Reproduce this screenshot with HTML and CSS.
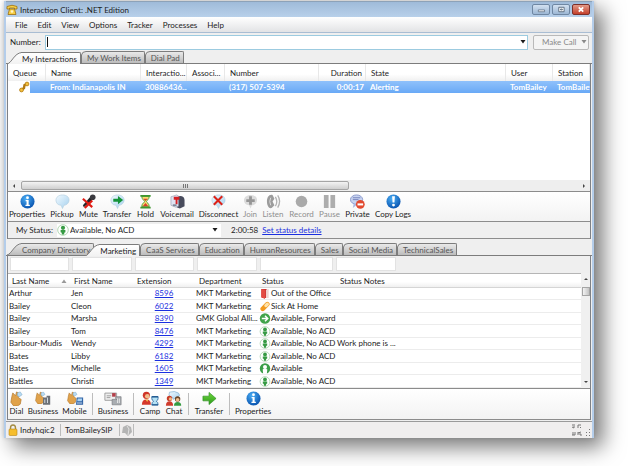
FILE: index.html
```html
<!DOCTYPE html>
<html lang="en">
<head>
<meta charset="utf-8">
<title>Interaction Client: .NET Edition</title>
<link rel="stylesheet" href="styles.css">
</head>
<body>
<svg class="defs" aria-hidden="true">
  <defs>
    <linearGradient id="tabgrey" x1="0" y1="0" x2="0" y2="1"><stop offset="0" stop-color="#e9e9e9"/><stop offset="1" stop-color="#bcbcbc"/></linearGradient>
    <linearGradient id="tablight" x1="0" y1="0" x2="0" y2="1"><stop offset="0" stop-color="#fff"/><stop offset="1" stop-color="#f2f2f2"/></linearGradient>
    <radialGradient id="blue" cx=".4" cy=".3" r=".7"><stop offset="0" stop-color="#4aaef5"/><stop offset="1" stop-color="#0a55b0"/></radialGradient>
    <linearGradient id="green" x1="0" y1="0" x2="0" y2="1"><stop offset="0" stop-color="#6fd83c"/><stop offset="1" stop-color="#2c9a1c"/></linearGradient>
    <linearGradient id="bubble" x1="0" y1="0" x2="1" y2="1"><stop offset="0" stop-color="#f2faff"/><stop offset="1" stop-color="#a4d0ee"/></linearGradient>
  </defs>
  <symbol id="cap-big" viewBox="0 0 15 12"><path d="M0 12C5 11 7 1 15 .5V12Z" stroke="none"/><path d="M0 12C5 11 7 1 15 .5" fill="none" stroke="#7c7c7c"/></symbol>
  <symbol id="cap-small" viewBox="0 0 5 12"><path d="M.5 12V4Q1 .5 5 .5V12Z" stroke="none"/><path d="M.5 12V4Q1 .5 5 .5" fill="none" stroke="#7c7c7c"/></symbol>
  <symbol id="info" viewBox="0 0 16 16"><circle cx="8" cy="8" r="7.5" fill="url(#blue)"/><circle cx="8" cy="4" r="1.5" fill="#fff"/><path d="M6 6.5h3.2v5h1.3v1.3H5.8v-1.3H7V7.8H6Z" fill="#fff"/></symbol>
  <symbol id="pickup" viewBox="0 0 16 16"><path d="M8 1C12 1 15 3 15 6.500S12 12 9.500 12L8 15.500 6.500 12C3 12 1 9.500 1 6.500S4 1 8 1Z" fill="url(#bubble)" stroke="#b4cfe0" stroke-width=".7"/></symbol>
  <symbol id="mute" viewBox="0 0 16 16"><path d="M13.500 1.500 15 4 9 9 3 14 2 12 9 4Z" fill="#252528"/><circle cx="12.500" cy="3.500" r="3" fill="#3b3b40"/><path d="m2 5 10 9M12 7 4 15" stroke="#e01b13" stroke-width="2.300"/></symbol>
  <symbol id="transfer" viewBox="0 0 16 16"><use href="#pickup"/><path d="M3.500 5h5V2.200L14 6.500 8.500 11V8.300h-5Z" fill="#14943a"/></symbol>
  <symbol id="hold" viewBox="0 0 16 16"><path d="M4 2.500h8C12 6 9 7 9 8s3 2 3 5.500H4C4 10 7 9 7 8S4 6 4 2.500Z" fill="#f9dc70" stroke="#4d9e38"/><path d="M2.500 1h11v2h-11ZM2.500 13.500h11v2h-11Z" fill="#3e962e"/><path d="M5.500 5h5L8 7.500ZM5 13l3-3.500 3 3.500Z" fill="#d8432c"/></symbol>
  <symbol id="voicemail" viewBox="0 0 16 16"><path d="M7 5q0-3 4-3t4.500 4v7l-5 2.500L7 14Z" fill="#484b5c"/><path d="m1 3 6-2 2 1v11l-3 1-5-2Z" fill="#dfe4f3" stroke="#8f94a8" stroke-width=".6"/><path d="M4 3h6v3H8v5H6V6H4Z" fill="#d52024"/><path d="M3 11h4v2H3Z" fill="#7f8798"/></symbol>
  <symbol id="disconnect" viewBox="0 0 16 16"><use href="#pickup"/><path d="m3 2.500 9 9M12 2.500l-9 9" stroke="#dd2218" stroke-width="2.200"/></symbol>
  <symbol id="join" viewBox="0 0 16 16"><path d="M8 1C12 1 15 3 15 6.500S12 12 9.500 12L8 15.500 6.500 12C3 12 1 9.500 1 6.500S4 1 8 1Z" fill="#dcdcdc"/><path d="M8 2.500v9M3.500 7h9" stroke="#969696" stroke-width="3"/></symbol>
  <symbol id="listen" viewBox="0 0 16 16"><path d="M7 1C3 0 1 4 1 8s2 8 5 7l3-3-2-4 2-3Z" fill="#9c9c9c"/><path d="M5 4q-2 4 0 8" fill="none" stroke="#dedede"/><path d="M10 3q3 5 0 10M12.500 1.500q4 6 0 13" fill="none" stroke="#b2b2b2" stroke-width="1.400"/></symbol>
  <symbol id="record" viewBox="0 0 16 16"><circle cx="8" cy="8" r="6.200" fill="#aaa"/></symbol>
  <symbol id="pause" viewBox="0 0 16 16"><path d="M2 1h5v14H2ZM9 1h5v14H9Z" fill="#adadad"/></symbol>
  <symbol id="private" viewBox="0 0 16 16"><ellipse cx="7" cy="6" rx="6.500" ry="5" fill="#c7d3f0" stroke="#8997cb"/><path d="M3 4h8M3 6h6" stroke="#7582bb"/><path d="m4 10-1 5 5-4Z" fill="#a9b8e4"/><circle cx="11" cy="11" r="4.700" fill="#e2492f"/><path d="M8 10h6v2.200H8Z" fill="#fff"/></symbol>
  <symbol id="copylogs" viewBox="0 0 16 16"><circle cx="8" cy="8" r="7.500" fill="url(#blue)"/><path d="M6.500 2.500h3L9 9H7Z" fill="#fff"/><circle cx="8" cy="11.800" r="1.500" fill="#fff"/></symbol>
  <symbol id="hand" viewBox="0 0 16 16"><path d="M3 6 4 2l3 3 1-4 2 1v5l3 2-1 5-3 2H5l-3-4Z" fill="#e0a24b" stroke="#b0752a" stroke-width=".7"/><path d="m9 2 3-1 2 3-3 2-2-1Z" fill="#b9dcf3" stroke="#7baacb" stroke-width=".6"/></symbol>
  <symbol id="dialbusiness" viewBox="0 0 20 16"><use href="#hand" width="14" height="14"/><path d="M10 7h4V5h4v10h-8Z" fill="#6c7178"/><path d="M11.500 9h1v4h-1ZM14.500 7h1v6h-1Z" fill="#dce2e7"/></symbol>
  <symbol id="dialmobile" viewBox="0 0 20 16"><use href="#hand" width="14" height="14"/><path d="M12 7h7v8h-8Z" fill="#2f62a5"/><path d="M13 8h5l-.5 3h-5Z" fill="#a9d2f2"/><path d="M12 13h6" stroke="#dce8f6"/></symbol>
  <symbol id="card" viewBox="0 0 20 16"><path d="M1 2h13v8H1Z" fill="#eee" stroke="#999"/><path d="M3 5h5M3 7h4" stroke="#999"/><path d="M9 2h4v4H9Z" fill="#b23f4a"/><path d="M9 9h4V6h6v9H9Z" fill="#a9adb1" stroke="#74787c" stroke-width=".7"/><path d="M14 8h1v5M17 8v5" stroke="#eee"/></symbol>
  <symbol id="camp" viewBox="0 0 20 16"><circle cx="6" cy="4.500" r="4" fill="#cf3427"/><circle cx="7" cy="5.500" r="2.600" fill="#efbd8c"/><path d="M1 15q0-6 5-6t5 6Z" fill="#d5382a"/><path d="M5 9h3l-1 3Z" fill="#f4ca4c"/><path d="M12 6h7v2q0 2-2 3 2 1 2 4h-7q0-3 2-4-2-1-2-3Z" fill="#b5e1f4" stroke="#3471a7"/><path d="M12 6h7M12 15h7" stroke="#235c92" stroke-width="1.500"/></symbol>
  <symbol id="chat" viewBox="0 0 20 16"><path d="M5 1q6-2 10 1 3 4-3 5l-3 2V7q-6 0-4-6Z" fill="url(#bubble)" stroke="#78aace" stroke-width=".7"/><circle cx="5" cy="8" r="3" fill="#c63b26"/><circle cx="6" cy="8.500" r="1.800" fill="#edb988"/><path d="M1 16q0-5 4-5t4 5Z" fill="#d03b2c"/><circle cx="14" cy="8.500" r="3" fill="#6b4526"/><circle cx="14" cy="9.500" r="2" fill="#efc090"/><path d="M10 16q0-4 4-4t4 4Z" fill="#349b42"/></symbol>
  <symbol id="arrow" viewBox="0 0 16 16"><path d="M1 5.500h6.500V1.500L15 8l-7.500 6.500v-4H1Z" fill="url(#green)" stroke="#2c8d22" stroke-width=".7"/></symbol>
  <symbol id="person" viewBox="0 0 12 12"><circle cx="6" cy="6" r="5.300" fill="#fff" stroke="#9fcea2" stroke-width=".8"/><circle cx="6" cy="3.800" r="2.100" fill="#379b44"/><path d="M3.600 6h4.800v2.200L7.200 8.700V10.500H4.800V8.700L3.600 8.200Z" fill="#379b44"/></symbol>
  <symbol id="avail" viewBox="0 0 12 12"><circle cx="6" cy="6" r="5.700" fill="#3a9e47"/><circle cx="6" cy="4.300" r="2.200" fill="#fff"/><path d="M3.500 7q2.500-2 5 0L8 12H4Z" fill="#fff"/></symbol>
  <symbol id="forward" viewBox="0 0 12 12"><circle cx="6" cy="6" r="5.700" fill="#41a44b"/><path d="M2.500 6h6M6 3l3 3-3 3" fill="none" stroke="#fff" stroke-width="1.600"/></symbol>
  <symbol id="door" viewBox="0 0 12 12"><path d="M2 1h6v10H3L2 10Z" fill="#cf2c2b"/><path d="m7 2 3-1v10l-3 0Z" fill="#efd4cf"/><path d="m2 1 4 1v10l-4-2Z" fill="#e34c43"/></symbol>
  <symbol id="pill" viewBox="0 0 12 12"><path d="m3.500 8.500 5-5" stroke="#f29a1f" stroke-width="5" stroke-linecap="round"/><path d="m7 5 1.500-1.500" stroke="#ffe3a8" stroke-width="3.600" stroke-linecap="round"/></symbol>
  <symbol id="ring" viewBox="0 0 12 12"><path d="M3.500 9 6 7 6.500 4 9 3" fill="none" stroke="#b27a12" stroke-width="2.400"/><circle cx="3.500" cy="9" r="1.900" fill="#f3c03c" stroke="#b27a12" stroke-width=".8"/><circle cx="9" cy="3" r="1.900" fill="#f3c03c" stroke="#b27a12" stroke-width=".8"/></symbol>
  <symbol id="phone" viewBox="0 0 12 12"><path d="M1 5V2.500Q6 0 11 2.500V5H8.500V4h-5v1Z" fill="#f7d24b" stroke="#9c6f10" stroke-width=".8"/><path d="M3.500 5h5L10 10.500H2Z" fill="#f7cf45" stroke="#9c6f10" stroke-width=".8"/><circle cx="6" cy="7.500" r="1.300" fill="#fff6cd"/></symbol>
  <symbol id="lock" viewBox="0 0 12 12"><path d="M3.500 6V4q0-3 2.500-3t2.500 3v2" fill="none" stroke="#a38b42" stroke-width="1.400"/><rect x="2" y="5" width="8" height="6.500" rx="1" fill="#f6bd2c" stroke="#b98614" stroke-width=".6"/></symbol>
  <symbol id="grey" viewBox="0 0 12 12"><path d="m2 3 4-2 4 2 1 5-4 4-3-3H1Z" fill="#b4b4b4"/><path d="m6 2 2 3-1 6" fill="none" stroke="#e3e3e3"/></symbol>
  <symbol id="down" viewBox="0 0 6 4"><path d="M.5 0h5L3 3.500Z" fill="currentColor"/></symbol>
</svg>

<main class="window">
  <header class="title">
    <svg class="i12"><use href="#phone"/></svg>
    <h1>Interaction Client: .NET Edition</h1>
    <button class="win" type="button" aria-label="Minimize"><svg viewBox="0 0 18 10"><path d="M6 5.500h7v2H6Z" fill="#fff" stroke="#556579" stroke-width=".8"/></svg></button>
    <button class="win" type="button" aria-label="Maximize"><svg viewBox="0 0 18 10"><path d="M6.500 2.500h6v5h-6Z" fill="#fff" stroke="#556579"/><path d="M8.500 4.500h2v1h-2Z" stroke="#556579" fill="none"/></svg></button>
    <button class="win close" type="button" aria-label="Close"><svg viewBox="0 0 18 10"><path d="m6.500 2.500 5 5M11.500 2.500l-5 5" stroke="#fff" stroke-width="2"/></svg></button>
  </header>

  <nav class="menu">
    <button type="button">File</button><button type="button">Edit</button><button type="button">View</button><button type="button">Options</button><button type="button">Tracker</button><button type="button">Processes</button><button type="button">Help</button>
  </nav>

  <form class="dial">
    <label for="number">Number:</label>
    <div class="combo"><span class="caret"></span><input id="number" type="text"><svg class="down"><use href="#down"/></svg></div>
    <button class="call" type="button" disabled>Make Call <svg class="down"><use href="#down"/></svg></button>
  </form>

  <div class="tabs upper">
    <button class="tab active" type="button"><svg class="big"><use href="#cap-big"/></svg><span>My Interactions</span></button>
    <button class="tab" type="button"><svg class="small"><use href="#cap-small"/></svg><span>My Work Items</span></button>
    <button class="tab" type="button"><svg class="small"><use href="#cap-small"/></svg><span>Dial Pad</span></button>
  </div>

  <section class="panel">
    <div class="calls">
      <table>
        <colgroup><col class="c-queue"><col class="c-name"><col class="c-int"><col class="c-assoc"><col class="c-num"><col class="c-dur"><col><col class="c-user"><col class="c-station"></colgroup>
        <thead><tr><th>Queue</th><th>Name</th><th>Interactio...</th><th>Associ...</th><th>Number</th><th class="right">Duration</th><th>State</th><th>User</th><th>Station</th></tr></thead>
        <tbody><tr><td class="ring"><svg class="i12"><use href="#ring"/></svg></td><td>From: Indianapolis IN</td><td>30886436...</td><td></td><td>(317) 507-5394</td><td class="right">0:00:17</td><td>Alerting</td><td>TomBailey</td><td>TomBailey</td></tr></tbody>
      </table>
    </div>
    <div class="hscroll"><svg class="arrow" viewBox="0 0 6 6"><path d="M4 1v4L2 3Z"/></svg><span class="thumb"><i></i></span><svg class="arrow" viewBox="0 0 6 6"><path d="M2 1v4l2-2Z"/></svg></div>
    <div class="tools call-tools">
      <button type="button"><svg><use href="#info"/></svg>Properties</button>
      <button type="button"><svg><use href="#pickup"/></svg>Pickup</button>
      <button type="button"><svg><use href="#mute"/></svg>Mute</button>
      <button type="button"><svg><use href="#transfer"/></svg>Transfer</button>
      <button type="button"><svg><use href="#hold"/></svg>Hold</button>
      <button type="button"><svg><use href="#voicemail"/></svg>Voicemail</button>
      <button type="button"><svg><use href="#disconnect"/></svg>Disconnect</button>
      <button type="button" disabled><svg><use href="#join"/></svg>Join</button>
      <button type="button" disabled><svg><use href="#listen"/></svg>Listen</button>
      <button type="button" disabled><svg><use href="#record"/></svg>Record</button>
      <button type="button" disabled><svg><use href="#pause"/></svg>Pause</button>
      <button type="button"><svg><use href="#private"/></svg>Private</button>
      <button type="button"><svg><use href="#copylogs"/></svg>Copy Logs</button>
    </div>
    <div class="mystatus">
      <label for="status">My Status:</label>
      <div class="pick"><svg class="i12"><use href="#person"/></svg><select id="status"><option>Available, No ACD</option></select><svg class="down"><use href="#down"/></svg></div>
      <span class="timer">2:00:58</span>
      <a href="#">Set status details</a>
    </div>
  </section>

  <div class="tabs lower">
    <button class="tab" type="button"><svg class="big"><use href="#cap-big"/></svg><span>Company Directory</span></button>
    <button class="tab active" type="button"><svg class="big"><use href="#cap-big"/></svg><span>Marketing</span></button>
    <button class="tab" type="button"><svg class="small"><use href="#cap-small"/></svg><span>CaaS Services</span></button>
    <button class="tab" type="button"><svg class="small"><use href="#cap-small"/></svg><span>Education</span></button>
    <button class="tab" type="button"><svg class="small"><use href="#cap-small"/></svg><span>HumanResources</span></button>
    <button class="tab" type="button"><svg class="small"><use href="#cap-small"/></svg><span>Sales</span></button>
    <button class="tab" type="button"><svg class="small"><use href="#cap-small"/></svg><span>Social Media</span></button>
    <button class="tab" type="button"><svg class="small"><use href="#cap-small"/></svg><span>TechnicalSales</span></button>
  </div>

  <section class="panel">
    <div class="filters">
      <input type="text" aria-label="Filter last name"><input type="text" aria-label="Filter first name"><input type="text" aria-label="Filter extension"><input type="text" aria-label="Filter department"><input type="text" aria-label="Filter status"><input type="text" aria-label="Filter notes">
    </div>
    <div class="directory">
      <table>
        <colgroup><col class="d-last"><col class="d-first"><col class="d-ext"><col class="d-dept"><col class="d-status"><col></colgroup>
        <thead><tr><th><span class="sorted">Last Name <svg class="down"><use href="#down"/></svg></span></th><th>First Name</th><th>Extension</th><th>Department</th><th>Status</th><th>Status Notes</th></tr></thead>
        <tbody>
          <tr><td>Arthur</td><td>Jen</td><td><a href="#">8596</a></td><td>MKT Marketing</td><td><span class="st"><svg class="i12"><use href="#door"/></svg>Out of the Office</span></td><td></td></tr>
          <tr><td>Bailey</td><td>Cleon</td><td><a href="#">6022</a></td><td>MKT Marketing</td><td><span class="st"><svg class="i12"><use href="#pill"/></svg>Sick At Home</span></td><td></td></tr>
          <tr><td>Bailey</td><td>Marsha</td><td><a href="#">8390</a></td><td>GMK Global Alli...</td><td><span class="st"><svg class="i12"><use href="#forward"/></svg>Available, Forward</span></td><td></td></tr>
          <tr><td>Bailey</td><td>Tom</td><td><a href="#">8476</a></td><td>MKT Marketing</td><td><span class="st"><svg class="i12"><use href="#person"/></svg>Available, No ACD</span></td><td></td></tr>
          <tr><td>Barbour-Mudis</td><td>Wendy</td><td><a href="#">4292</a></td><td>MKT Marketing</td><td><span class="st"><svg class="i12"><use href="#person"/></svg>Available, No ACD</span></td><td>Work phone is ...</td></tr>
          <tr><td>Bates</td><td>Libby</td><td><a href="#">6182</a></td><td>MKT Marketing</td><td><span class="st"><svg class="i12"><use href="#person"/></svg>Available, No ACD</span></td><td></td></tr>
          <tr><td>Bates</td><td>Michelle</td><td><a href="#">1605</a></td><td>MKT Marketing</td><td><span class="st"><svg class="i12"><use href="#avail"/></svg>Available</span></td><td></td></tr>
          <tr><td>Battles</td><td>Christi</td><td><a href="#">1349</a></td><td>MKT Marketing</td><td><span class="st"><svg class="i12"><use href="#person"/></svg>Available, No ACD</span></td><td></td></tr>
        </tbody>
      </table>
      <div class="vscroll"><svg class="arrow" viewBox="0 0 6 6"><path d="M1 4h4L3 2Z"/></svg><span class="vthumb"></span><svg class="arrow last" viewBox="0 0 6 6"><path d="M1 2h4L3 4Z"/></svg></div>
    </div>
    <div class="tools dir-tools">
      <button type="button"><svg><use href="#hand"/></svg>Dial</button>
      <button type="button"><svg class="wide"><use href="#dialbusiness"/></svg>Business</button>
      <button type="button"><svg class="wide"><use href="#dialmobile"/></svg>Mobile</button>
      <hr>
      <button type="button"><svg class="wide"><use href="#card"/></svg>Business</button>
      <hr>
      <button type="button"><svg class="wide"><use href="#camp"/></svg>Camp</button>
      <button type="button"><svg class="wide"><use href="#chat"/></svg>Chat</button>
      <hr>
      <button type="button"><svg><use href="#arrow"/></svg>Transfer</button>
      <hr>
      <button type="button"><svg><use href="#info"/></svg>Properties</button>
    </div>
  </section>

  <footer class="statusbar">
    <span class="server"><svg class="i12"><use href="#lock"/></svg>Indyhqic2</span>
    <span class="station">TomBaileySIP</span>
    <span class="plug"><svg class="i12"><use href="#grey"/></svg></span>
    <svg class="grips" viewBox="0 0 20 12"><path d="M1 1h3M3 2v2M7 4V1h3M1 3l2 1M9 3l1 1M2 8v3M4 8v3H1M7 8v3M7 9l3-1M9 9v2h2" fill="none" stroke="#777"/><path d="M18 5h1v1h-1ZM18 8h1v1h-1ZM18 11h1v1h-1ZM15 8h1v1h-1ZM15 11h1v1h-1Z" fill="#777"/></svg>
  </footer>
</main>
</body>
</html>
```
FILE: styles.css
```css
* { box-sizing: border-box; }

body {
  margin: 0;
  padding: 1px 34px 28px 4px;
  background: #fff;
  color: #1c1c1c;
  font: 8px/12px Lato, "Noto Sans", sans-serif;
}

button, input, select {
  margin: 0;
  padding: 0;
  border: 0;
  background: none;
  color: inherit;
  font: inherit;
  white-space: nowrap;
}

a { color: #1a2fe0; }
.defs { position: absolute; width: 0; height: 0; }
.i12 { width: 12px; height: 12px; flex: none; }
.down { width: 6px; height: 4px; flex: none; }

.window {
  border: solid #b4cdea;
  border-width: 0 2px 0 2px;
  background: #efefef;
  box-shadow: 9px 9px 20px #777, 0 0 4px #ccc;
}

/* Title bar and menu */
.title {
  display: flex;
  align-items: center;
  gap: 2px;
  height: 16px;
  padding: 0 2px 0 0;
  border-top: 1px solid #8da2b8;
  background: linear-gradient(#9fbbd9, #b8d0ea);
}
.title h1 { flex: 1; margin: 0; font-size: 8px; font-weight: 400; }
.win {
  width: 18px;
  height: 11px;
  border: 1px solid #6f87a3;
  border-radius: 2px;
  background: linear-gradient(#d2e0f0, #9db8d5);
}
.win svg { display: block; width: 100%; height: 9px; }
.close { border-color: #7c2f2a; background: linear-gradient(#e39a88, #c4402c); }

.menu {
  display: flex;
  gap: 10px;
  height: 16px;
  padding-left: 9px;
  border-bottom: 1px solid #a9bdd3;
  background: linear-gradient(#fff, #e2e3e5);
}

/* Number entry */
.dial {
  display: flex;
  align-items: center;
  gap: 5px;
  height: 18px;
  padding: 1px 3px 1px 4px;
}
.dial label { width: 30px; }
.combo {
  display: flex;
  flex: 1;
  align-items: center;
  height: 15px;
  padding: 1px 1px;
  border: 1px solid #9ccbe0;
  background: #fff;
}
.combo input { flex: 1; min-width: 0; outline: 0; }
.caret { width: 1px; height: 10px; background: #111; }
.call {
  display: flex;
  align-items: center;
  justify-content: space-between;
  width: 56px;
  height: 15px;
  padding: 0 1px 0 8px;
  border: 1px solid #b9b9b9;
  border-radius: 2px;
  background: #f4f4f4;
  color: #8a8a8a;
}

/* Tabs */
.tabs {
  display: flex;
  align-items: flex-end;
  padding-left: 1px;
  border-bottom: 1px solid #7c7c7c;
}
.upper { height: 13px; }
.lower { height: 17px; }
.tab { display: flex; height: 12px; color: #555; }
.tab span {
  height: 12px;
  padding: 0 3px 0 1px;
  border-top: 1px solid #7c7c7c;
  border-right: 1px solid #7c7c7c;
  border-radius: 0 2px 0 0;
  background: linear-gradient(#e9e9e9, #bcbcbc);
  line-height: 12px;
}
.tab svg { flex: none; height: 12px; fill: url(#tabgrey); }
.tab .big { width: 15px; margin-right: -1px; }
.tab .small { width: 5px; }
.tab.active { color: #1c1c1c; z-index: 1; margin-bottom: -1px; }
.tab.active svg { fill: url(#tablight); }
.tab.active span { background: linear-gradient(#fff, #f2f2f2); }
.lower .active { margin-left: -9px; }

/* Shared table look */
.panel { margin: 0 1px; border: solid #7d8086; border-width: 0 1px; }
table { width: 100%; border-collapse: separate; border-spacing: 0; table-layout: fixed; }
th, td { overflow: hidden; padding: 0; font-weight: 400; text-align: left; white-space: nowrap; }
th { background: linear-gradient(#fff 60%, #f0f0f0); }
.right { text-align: right; }

/* Active calls */
.calls { min-height: 116px; background: #fff; }
.calls th { height: 17px; padding: 0 3px 0 5px; border-right: 1px solid #e8e8e8; }
.calls td {
  height: 12px;
  padding: 0 2px 0 4px;
  background: linear-gradient(#8fc1fb, #69a9f6);
  color: #fff;
  font-weight: 700;
}
.calls .ring { padding: 0 0 0 10px; background: linear-gradient(90deg, #fff 22px, transparent 22px), linear-gradient(#8fc1fb, #69a9f6); }
.ring svg { display: block; }
.c-queue { width: 38px; }
.c-name { width: 95px; }
.c-int { width: 46px; }
.c-assoc { width: 38px; }
.c-num { width: 94px; }
.c-dur, .c-user { width: 47px; }
.c-station { width: 37px; }

.arrow { width: 6px; height: 6px; fill: #444; }
.hscroll { display: flex; align-items: center; gap: 4px; height: 12px; padding: 0 3px; border-bottom: 1px solid #8c8c8c; background: #eee; }
.thumb {
  width: 57%;
  height: 9px;
  margin-right: auto;
  border: 1px solid #a5a5a5;
  border-radius: 2px;
  background: linear-gradient(#f3f3f3, #cfcfcf);
}
.thumb i { display: block; width: 5px; height: 4px; margin: 2px auto; background: repeating-linear-gradient(90deg, #777 0 1px, transparent 1px 2px); }

/* Icon toolbars */
.tools {
  display: grid;
  align-items: center;
  height: 30px;
  padding-left: 2px;
  border-bottom: 1px solid #8c8c8c;
  background: linear-gradient(#fff, #f3f3f3);
}
.tools button {
  display: flex;
  flex-direction: column;
  align-items: center;
  justify-self: center;
  line-height: 11px;
}
.tools svg { width: 15px; height: 15px; flex: none; }
.tools .wide { width: 18px; }
.tools button:disabled { color: #8f8f8f; }
.call-tools { grid-template-columns: 34px 22px 17px 26px 17px 32px 37px 12px 20px 23px 19px 23px 34px; column-gap: 7px; }
.tools.dir-tools {
  grid-template-columns: 13px 28px 23px 1px 28px 1px 20px 16px 1px 28px 1px 34px;
  column-gap: 6px;
  height: 32px;
  border-top: 1px solid #8c8c8c;
}
.tools hr { width: 1px; height: 22px; margin: 0; border: 0; background: #bdbdbd; }

/* Own status */
.mystatus { display: flex; align-items: center; height: 17px; padding-left: 8px; border-bottom: 1px solid #8c8c8c; }
.mystatus label { width: 41px; }
.pick { display: flex; align-items: center; gap: 1px; width: 164px; height: 13px; padding-right: 3px; background: #fff; }
.pick select { flex: 1; appearance: none; }
.timer { margin: 0 4px 0 10px; }

/* Directory */
.filters {
  display: grid;
  grid-template-columns: 59px 60px 59px 60px 73px 60px;
  gap: 3px;
  padding: 1px 2px 2px;
}
.filters input { width: 100%; height: 14px; border: 1px solid #e2e2e2; background: #fff; }
.directory { display: flex; background: #fff; }
.directory table { flex: 1; }
.directory th { height: 15px; padding-left: 4px; border-top: 1px solid #b5b5b5; border-bottom: 1px solid #d5d5d5; }
.directory td { height: 12px; padding-left: 1px; border-bottom: 1px solid #ececec; line-height: 11px; }
.directory tr:nth-child(even) td { height: 13px; }
.directory td:nth-child(3) { padding-right: 1px; text-align: center; }
.d-last, .d-ext { width: 62px; }
.d-first, .d-dept { width: 63px; }
.d-status { width: 78px; }
.sorted { display: flex; align-items: center; justify-content: space-between; padding-right: 3px; }
.sorted .down { color: #999; transform: rotate(180deg); }
.st { display: flex; align-items: center; height: 11px; }
.st svg { height: 11px; }
.vscroll { display: flex; flex-direction: column; align-items: center; width: 9px; padding: 3px 0; background: #f0f0f0; }
.vthumb { width: 8px; height: 9px; margin-top: 5px; border: 1px solid #a5a5a5; background: linear-gradient(90deg, #f3f3f3, #c4c4c4); }
.last { margin-top: auto; }

/* Status bar */
.statusbar { display: flex; align-items: center; height: 17px; margin-top: 1px; padding: 1px; border-top: 1px solid #9a9a9a; background: #f0eeee; }
.statusbar span { display: flex; align-items: center; height: 12px; border-right: 1px solid #bbb; }
.statusbar .server { gap: 1px; width: 54px; }
.statusbar .station { width: 59px; padding-left: 4px; }
.statusbar .plug { justify-content: center; width: 14px; }
.grips { width: 20px; height: 12px; margin-left: auto; }
```
